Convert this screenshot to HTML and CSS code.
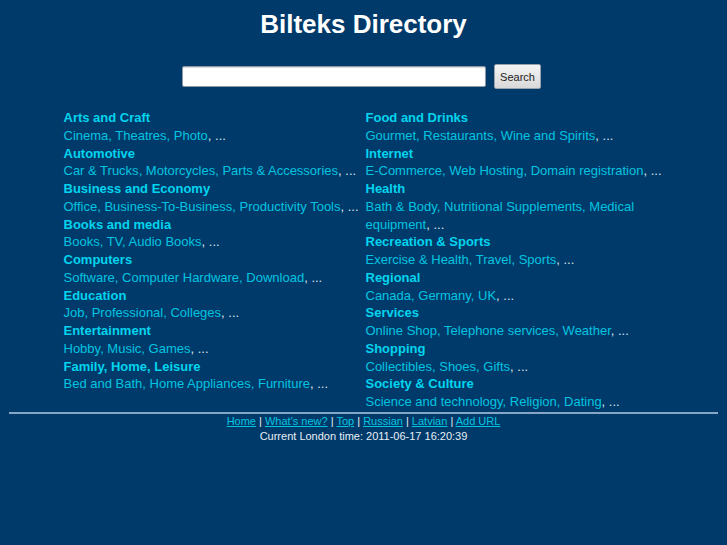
FILE: index.html
```html
<!DOCTYPE html>
<html>
<head>
<meta charset="utf-8">
<title>Bilteks Directory</title>
<link rel="stylesheet" href="styles.css">
</head>
<body>
<h1 class="title">Bilteks Directory</h1>
<form class="search">
  <input class="search-input" type="text">
  <button class="search-btn" type="button">Search</button>
</form>
<div class="dir">
  <div class="col">
    <div class="cat"><a class="cat-title" href="#">Arts and Craft</a><div class="subs"><a href="#">Cinema</a>, <a href="#">Theatres</a>, <a href="#">Photo</a><span class="more">, ...</span></div></div>
    <div class="cat"><a class="cat-title" href="#">Automotive</a><div class="subs"><a href="#">Car &amp; Trucks</a>, <a href="#">Motorcycles</a>, <a href="#">Parts &amp; Accessories</a><span class="more">, ...</span></div></div>
    <div class="cat"><a class="cat-title" href="#">Business and Economy</a><div class="subs"><a href="#">Office</a>, <a href="#">Business-To-Business</a>, <a href="#">Productivity Tools</a><span class="more">, ...</span></div></div>
    <div class="cat"><a class="cat-title" href="#">Books and media</a><div class="subs"><a href="#">Books</a>, <a href="#">TV</a>, <a href="#">Audio Books</a><span class="more">, ...</span></div></div>
    <div class="cat"><a class="cat-title" href="#">Computers</a><div class="subs"><a href="#">Software</a>, <a href="#">Computer Hardware</a>, <a href="#">Download</a><span class="more">, ...</span></div></div>
    <div class="cat"><a class="cat-title" href="#">Education</a><div class="subs"><a href="#">Job</a>, <a href="#">Professional</a>, <a href="#">Colleges</a><span class="more">, ...</span></div></div>
    <div class="cat"><a class="cat-title" href="#">Entertainment</a><div class="subs"><a href="#">Hobby</a>, <a href="#">Music</a>, <a href="#">Games</a><span class="more">, ...</span></div></div>
    <div class="cat"><a class="cat-title" href="#">Family, Home, Leisure</a><div class="subs"><a href="#">Bed and Bath</a>, <a href="#">Home Appliances</a>, <a href="#">Furniture</a><span class="more">, ...</span></div></div>
  </div>
  <div class="col">
    <div class="cat"><a class="cat-title" href="#">Food and Drinks</a><div class="subs"><a href="#">Gourmet</a>, <a href="#">Restaurants</a>, <a href="#">Wine and Spirits</a><span class="more">, ...</span></div></div>
    <div class="cat"><a class="cat-title" href="#">Internet</a><div class="subs"><a href="#">E-Commerce</a>, <a href="#">Web Hosting</a>, <a href="#">Domain registration</a><span class="more">, ...</span></div></div>
    <div class="cat"><a class="cat-title" href="#">Health</a><div class="subs"><a href="#">Bath &amp; Body</a>, <a href="#">Nutritional Supplements</a>, <a href="#">Medical</a><br><a href="#">equipment</a><span class="more">, ...</span></div></div>
    <div class="cat"><a class="cat-title" href="#">Recreation &amp; Sports</a><div class="subs"><a href="#">Exercise &amp; Health</a>, <a href="#">Travel</a>, <a href="#">Sports</a><span class="more">, ...</span></div></div>
    <div class="cat"><a class="cat-title" href="#">Regional</a><div class="subs"><a href="#">Canada</a>, <a href="#">Germany</a>, <a href="#">UK</a><span class="more">, ...</span></div></div>
    <div class="cat"><a class="cat-title" href="#">Services</a><div class="subs"><a href="#">Online Shop</a>, <a href="#">Telephone services</a>, <a href="#">Weather</a><span class="more">, ...</span></div></div>
    <div class="cat"><a class="cat-title" href="#">Shopping</a><div class="subs"><a href="#">Collectibles</a>, <a href="#">Shoes</a>, <a href="#">Gifts</a><span class="more">, ...</span></div></div>
    <div class="cat"><a class="cat-title" href="#">Society &amp; Culture</a><div class="subs"><a href="#">Science and technology</a>, <a href="#">Religion</a>, <a href="#">Dating</a><span class="more">, ...</span></div></div>
  </div>
</div>
<hr class="rule">
<div class="footer">
  <div class="links"><a href="#">Home</a> | <a href="#">What's new?</a> | <a href="#">Top</a> | <a href="#">Russian</a> | <a href="#">Latvian</a> | <a href="#">Add URL</a></div>
  <div class="clock">Current London time: 2011-06-17 16:20:39</div>
</div>
</body>
</html>
```

FILE: styles.css
```css
html, body {
  background: #003a6a;
}
body {
  margin: 0;
  padding: 8px 8px;
  font-family: "Liberation Sans", Arial, sans-serif;
  font-size: 13px;
  color: #ffffff;
}
.title {
  margin: 0;
  padding-top: 1px;
  text-align: center;
  font-size: 26px;
  font-weight: bold;
  line-height: 30px;
  color: #ffffff;
}
.search {
  display: flex;
  justify-content: center;
  align-items: center;
  gap: 8px;
  margin: 25px 0 0 0;
  padding-right: 4px;
}
.search-input {
  box-sizing: border-box;
  width: 304px;
  height: 21px;
  margin: 0;
  padding: 1px 3px;
  border: 1px solid #8e99a6;
  border-radius: 2px;
  background: #ffffff;
  box-shadow: inset 0 1px 1px rgba(0, 0, 0, 0.15);
  font-family: "Liberation Sans", Arial, sans-serif;
  font-size: 13px;
}
.search-btn {
  box-sizing: border-box;
  width: 47px;
  height: 25px;
  margin: 0;
  padding: 0;
  border: 1px solid #9aa3ad;
  border-radius: 2px;
  background: linear-gradient(#f4f4f4, #d9d9d9);
  color: #222222;
  font-family: "Liberation Sans", Arial, sans-serif;
  font-size: 11px;
}
.dir {
  width: 600px;
  margin: 20px auto 0 auto;
  display: grid;
  grid-template-columns: 302px 298px;
  line-height: 17.75px;
}
.cat-title {
  font-weight: bold;
  color: #00d4ee;
  text-decoration: none;
}
.subs {
  color: #00c4e0;
}
.subs a {
  color: #00c4e0;
  text-decoration: none;
}
.more {
  color: #d8e2ec;
}
.rule {
  margin: 1px 1px 0 1px;
  height: 0;
  border: 0;
  border-top: 2px solid #86a6c8;
}
.footer {
  text-align: center;
  font-size: 11px;
  line-height: 15px;
  margin-top: 0;
  color: #e8eef4;
}
.links a {
  color: #00c4e0;
  text-decoration: underline;
}
```
